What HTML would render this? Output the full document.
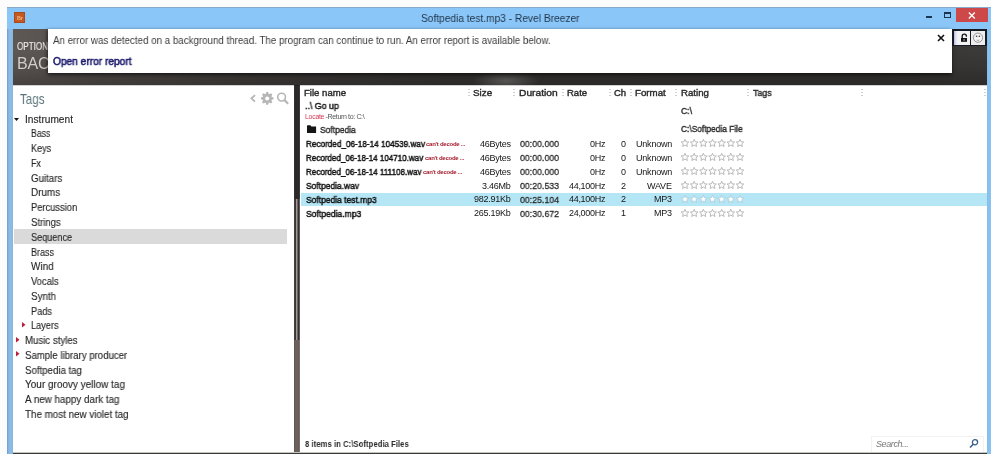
<!DOCTYPE html>
<html><head><meta charset="utf-8">
<style>
*{margin:0;padding:0;box-sizing:border-box}
html,body{width:991px;height:454px;overflow:hidden;background:#fcfcfc;font-family:"Liberation Sans",sans-serif;position:relative}
.a{position:absolute;white-space:pre;will-change:transform}
svg{position:absolute;overflow:visible}
</style></head><body>
<div class="a" style="left:7px;top:7px;width:984px;height:447px;background:#8bc6f8;"></div>
<div class="a" style="left:7px;top:7px;width:984px;height:1px;background:#88a9c9;"></div>
<div class="a" style="left:7px;top:29px;width:6px;height:425px;background:linear-gradient(90deg,#6f9ccc 0px,#7eaad8 1px,#8bbae6 2px,#8bbae6 5px,#8cb8d8 5px);"></div>
<div class="a" style="left:987px;top:29px;width:4px;height:425px;background:linear-gradient(90deg,#8ab8d8 0px,#88c2f0 1px);"></div>
<div class="a" style="left:14px;top:12px;width:11px;height:11px;background:#c4581f;border:1px solid #a84a1c;"></div>
<div class="a" style="left:17.20px;top:15.46px;font-size:5.5px;line-height:6.88px;font-weight:700;font-style:normal;color:#f0b88a;letter-spacing:-0.3px;">Br</div>
<div class="a" style="left:421.00px;top:12.21px;font-size:11px;line-height:13.75px;font-weight:400;font-style:normal;color:#1f3347;letter-spacing:0px;transform:scaleX(0.9258177570093459);transform-origin:0 50%;">Softpedia test.mp3 - Revel Breezer</div>
<div class="a" style="left:926px;top:16px;width:6px;height:2px;background:#1b3550;"></div>
<div class="a" style="left:944px;top:12px;width:7px;height:6px;border:1px solid #1b3550;border-top-width:2px;"></div>
<div class="a" style="left:956px;top:8px;width:32px;height:14px;background:#cd4848;"></div>
<svg style="left:968px;top:12px" width="8" height="7"><path d="M0.8 0.5 L6.8 6.5 M6.8 0.5 L0.8 6.5" stroke="#fff" stroke-width="1.3"/></svg>
<div class="a" style="left:13px;top:29px;width:974px;height:424px;background:#fff;"></div>
<div class="a" style="left:13px;top:29px;width:974px;height:56px;background:linear-gradient(180deg,rgba(0,0,0,0) 0px,rgba(0,0,0,0) 22px,rgba(0,0,0,.1) 40px,rgba(0,0,0,.25) 56px),linear-gradient(90deg,#5e5855 0%,#524d4a 10%,#433f3d 25%,#393736 45%,#383635 88%,#3a3837 95%,#3c3a39 100%);"></div>
<div class="a" style="left:440px;top:73px;width:140px;height:12px;background:radial-gradient(ellipse 34px 10px at 66px 8px,rgba(255,255,255,.2),rgba(255,255,255,0));"></div>
<div class="a" style="left:16.90px;top:39.80px;font-size:10.4px;line-height:13.00px;font-weight:400;font-style:normal;color:#ebe7e3;letter-spacing:0px;-webkit-text-stroke:0.15px #ebe7e3;transform:scaleX(0.78);transform-origin:0 50%;">OPTIONS</div>
<div class="a" style="left:16.80px;top:53.76px;font-size:16px;line-height:20.00px;font-weight:400;font-style:normal;color:#d2cdc9;letter-spacing:-0.2px;">BACK</div>
<div class="a" style="left:13px;top:85px;width:281px;height:368px;background:#fff;"></div>
<div class="a" style="left:20.10px;top:90.01px;font-size:14.5px;line-height:18.12px;font-weight:400;font-style:normal;color:#5b767b;letter-spacing:0px;transform:scaleX(0.8);transform-origin:0 50%;">Tags</div>
<div class="a" style="left:294px;top:85px;width:6px;height:114px;background:linear-gradient(90deg,#3a3838 0px,#2a2828 1px,#2a2828 5px,#3a3838 5px);"></div>
<div class="a" style="left:294px;top:199px;width:6px;height:141px;background:linear-gradient(90deg,#45403f 0px,#45403f 1px,#3b3635 1px,#3b3635 2px,#a29898 2px,#a29898 3px,#6d6565 3px,#6d6565 4px,#343030 4px,#343030 5px,#5e5a5a 5px);"></div>
<div class="a" style="left:294px;top:340px;width:6px;height:113px;background:linear-gradient(90deg,#5a504d 0px,#6b605c 1px,#6e6360 3px,#635955 5px,#7a706c 5px);"></div>
<div class="a" style="left:300px;top:85px;width:687px;height:368px;background:#fff;"></div>
<div class="a" style="left:13px;top:452px;width:974px;height:1px;background:#c4c4c0;"></div>
<div class="a" style="left:13px;top:453px;width:974px;height:1px;background:#3a3a36;"></div>
<div class="a" style="left:48px;top:29px;width:904px;height:44px;background:#fff;box-shadow:0 2px 4px rgba(0,0,0,.6),-2px 0 3px rgba(0,0,0,.2);"></div>
<div class="a" style="left:52.60px;top:33.70px;font-size:10.5px;line-height:13.12px;font-weight:400;font-style:normal;color:#3a3a3a;letter-spacing:0px;transform:scaleX(0.9290515309932785);transform-origin:0 50%;">An error was detected on a background thread. The program can continue to run. An error report is available below.</div>
<div class="a" style="left:52.60px;top:55.20px;font-size:10.5px;line-height:13.12px;font-weight:400;font-style:normal;color:#1c1a6c;letter-spacing:0px;-webkit-text-stroke:0.55px #1c1a6c;transform:scaleX(0.967940813810111);transform-origin:0 50%;">Open error report</div>
<svg style="left:937px;top:34px" width="8" height="8"><path d="M1 1 L7 7 M7 1 L1 7" stroke="#111" stroke-width="1.6"/></svg>
<div class="a" style="left:952px;top:29px;width:35px;height:17px;background:#161a24;"></div>
<div class="a" style="left:954px;top:31px;width:16px;height:14px;background:linear-gradient(90deg,#b4b6e6 0px,#e4e4f4 2px,#f2f2f2 4px);"></div>
<div class="a" style="left:971px;top:31px;width:14px;height:14px;background:#ededed;"></div>
<svg style="left:952px;top:29px" width="35" height="17"><path d="M10.2 9.2 V7.3 A2.1 2.1 0 0 1 14.4 7.3 V7.8" stroke="#111" stroke-width="1.3" fill="none"/><rect x="9" y="9" width="6" height="3.8" fill="#111"/><rect x="11.6" y="10.2" width="1" height="1.5" fill="#ddd"/><circle cx="26" cy="8.7" r="4.6" stroke="#8a8a8a" stroke-width="0.9" fill="#f4f4f4"/><circle cx="24.6" cy="7.3" r="0.8" fill="#333"/><circle cx="27.4" cy="7.3" r="0.8" fill="#333"/><path d="M24.6 11 Q26 12 27.4 11" stroke="#999" stroke-width="0.8" fill="none"/></svg>
<div class="a" style="left:14px;top:229px;width:273px;height:15px;background:#dadada;"></div>
<div class="a" style="left:24.60px;top:113.69px;font-size:10px;line-height:12.50px;font-weight:400;font-style:normal;color:#262626;letter-spacing:0px;-webkit-text-stroke:0.12px #262626;transform:scaleX(1.016);transform-origin:0 50%;">Instrument</div>
<svg style="left:14px;top:118.10px" width="5" height="3"><path d="M0 0 L5 0 L2.5 3 Z" fill="#111"/></svg>
<div class="a" style="left:30.60px;top:128.44px;font-size:10px;line-height:12.50px;font-weight:400;font-style:normal;color:#262626;letter-spacing:0px;-webkit-text-stroke:0.12px #262626;transform:scaleX(0.868);transform-origin:0 50%;">Bass</div>
<div class="a" style="left:30.60px;top:143.21px;font-size:10px;line-height:12.50px;font-weight:400;font-style:normal;color:#262626;letter-spacing:0px;-webkit-text-stroke:0.12px #262626;transform:scaleX(0.904);transform-origin:0 50%;">Keys</div>
<div class="a" style="left:30.60px;top:157.97px;font-size:10px;line-height:12.50px;font-weight:400;font-style:normal;color:#262626;letter-spacing:0px;-webkit-text-stroke:0.12px #262626;transform:scaleX(0.891);transform-origin:0 50%;">Fx</div>
<div class="a" style="left:30.60px;top:172.72px;font-size:10px;line-height:12.50px;font-weight:400;font-style:normal;color:#262626;letter-spacing:0px;-webkit-text-stroke:0.12px #262626;transform:scaleX(0.971);transform-origin:0 50%;">Guitars</div>
<div class="a" style="left:30.60px;top:187.48px;font-size:10px;line-height:12.50px;font-weight:400;font-style:normal;color:#262626;letter-spacing:0px;-webkit-text-stroke:0.12px #262626;transform:scaleX(0.988);transform-origin:0 50%;">Drums</div>
<div class="a" style="left:30.60px;top:202.25px;font-size:10px;line-height:12.50px;font-weight:400;font-style:normal;color:#262626;letter-spacing:0px;-webkit-text-stroke:0.12px #262626;transform:scaleX(0.934);transform-origin:0 50%;">Percussion</div>
<div class="a" style="left:30.60px;top:217.00px;font-size:10px;line-height:12.50px;font-weight:400;font-style:normal;color:#262626;letter-spacing:0px;-webkit-text-stroke:0.12px #262626;transform:scaleX(0.957);transform-origin:0 50%;">Strings</div>
<div class="a" style="left:30.60px;top:231.77px;font-size:10px;line-height:12.50px;font-weight:400;font-style:normal;color:#262626;letter-spacing:0px;-webkit-text-stroke:0.12px #262626;transform:scaleX(0.912);transform-origin:0 50%;">Sequence</div>
<div class="a" style="left:30.60px;top:246.53px;font-size:10px;line-height:12.50px;font-weight:400;font-style:normal;color:#262626;letter-spacing:0px;-webkit-text-stroke:0.12px #262626;transform:scaleX(0.9);transform-origin:0 50%;">Brass</div>
<div class="a" style="left:30.60px;top:261.29px;font-size:10px;line-height:12.50px;font-weight:400;font-style:normal;color:#262626;letter-spacing:0px;-webkit-text-stroke:0.12px #262626;transform:scaleX(0.991);transform-origin:0 50%;">Wind</div>
<div class="a" style="left:30.60px;top:276.05px;font-size:10px;line-height:12.50px;font-weight:400;font-style:normal;color:#262626;letter-spacing:0px;-webkit-text-stroke:0.12px #262626;transform:scaleX(0.937);transform-origin:0 50%;">Vocals</div>
<div class="a" style="left:30.60px;top:290.81px;font-size:10px;line-height:12.50px;font-weight:400;font-style:normal;color:#262626;letter-spacing:0px;-webkit-text-stroke:0.12px #262626;transform:scaleX(0.977);transform-origin:0 50%;">Synth</div>
<div class="a" style="left:30.60px;top:305.56px;font-size:10px;line-height:12.50px;font-weight:400;font-style:normal;color:#262626;letter-spacing:0px;-webkit-text-stroke:0.12px #262626;transform:scaleX(0.921);transform-origin:0 50%;">Pads</div>
<div class="a" style="left:30.60px;top:320.32px;font-size:10px;line-height:12.50px;font-weight:400;font-style:normal;color:#262626;letter-spacing:0px;-webkit-text-stroke:0.12px #262626;transform:scaleX(0.92);transform-origin:0 50%;">Layers</div>
<svg style="left:21.6px;top:321.84px" width="4" height="6"><path d="M0 0 L3.5 2.75 L0 5.5 Z" fill="#b8203a"/></svg>
<div class="a" style="left:24.60px;top:335.09px;font-size:10px;line-height:12.50px;font-weight:400;font-style:normal;color:#262626;letter-spacing:0px;-webkit-text-stroke:0.12px #262626;transform:scaleX(0.964);transform-origin:0 50%;">Music styles</div>
<svg style="left:15.8px;top:336.60px" width="4" height="6"><path d="M0 0 L3.5 2.75 L0 5.5 Z" fill="#b8203a"/></svg>
<div class="a" style="left:24.60px;top:349.85px;font-size:10px;line-height:12.50px;font-weight:400;font-style:normal;color:#262626;letter-spacing:0px;-webkit-text-stroke:0.12px #262626;transform:scaleX(0.963);transform-origin:0 50%;">Sample library producer</div>
<svg style="left:15.8px;top:351.36px" width="4" height="6"><path d="M0 0 L3.5 2.75 L0 5.5 Z" fill="#b8203a"/></svg>
<div class="a" style="left:24.60px;top:364.61px;font-size:10px;line-height:12.50px;font-weight:400;font-style:normal;color:#262626;letter-spacing:0px;-webkit-text-stroke:0.12px #262626;transform:scaleX(0.967);transform-origin:0 50%;">Softpedia tag</div>
<div class="a" style="left:24.60px;top:379.37px;font-size:10px;line-height:12.50px;font-weight:400;font-style:normal;color:#262626;letter-spacing:0px;-webkit-text-stroke:0.12px #262626;transform:scaleX(0.997);transform-origin:0 50%;">Your groovy yellow tag</div>
<div class="a" style="left:24.60px;top:394.13px;font-size:10px;line-height:12.50px;font-weight:400;font-style:normal;color:#262626;letter-spacing:0px;-webkit-text-stroke:0.12px #262626;transform:scaleX(0.983);transform-origin:0 50%;">A new happy dark tag</div>
<div class="a" style="left:24.60px;top:408.89px;font-size:10px;line-height:12.50px;font-weight:400;font-style:normal;color:#262626;letter-spacing:0px;-webkit-text-stroke:0.12px #262626;transform:scaleX(0.981);transform-origin:0 50%;">The most new violet tag</div>
<svg style="left:248px;top:90px" width="44" height="18"><path d="M7.1 5.1 L3.4 8.35 L7.0 11.6" stroke="#b6b6b6" stroke-width="1.8" fill="none"/><g transform="translate(19.2,8.4)" fill="#b6b6b6"><circle r="4.7"/><path d="M-1.6 -4 L-0.95 -6.3 L0.95 -6.3 L1.6 -4 Z" transform="rotate(0)"/><path d="M-1.6 -4 L-0.95 -6.3 L0.95 -6.3 L1.6 -4 Z" transform="rotate(45)"/><path d="M-1.6 -4 L-0.95 -6.3 L0.95 -6.3 L1.6 -4 Z" transform="rotate(90)"/><path d="M-1.6 -4 L-0.95 -6.3 L0.95 -6.3 L1.6 -4 Z" transform="rotate(135)"/><path d="M-1.6 -4 L-0.95 -6.3 L0.95 -6.3 L1.6 -4 Z" transform="rotate(180)"/><path d="M-1.6 -4 L-0.95 -6.3 L0.95 -6.3 L1.6 -4 Z" transform="rotate(225)"/><path d="M-1.6 -4 L-0.95 -6.3 L0.95 -6.3 L1.6 -4 Z" transform="rotate(270)"/><path d="M-1.6 -4 L-0.95 -6.3 L0.95 -6.3 L1.6 -4 Z" transform="rotate(315)"/><circle r="2" fill="#fff"/></g><circle cx="33.6" cy="7.1" r="3.9" stroke="#b6b6b6" stroke-width="1.6" fill="none"/><path d="M36.4 10.1 L40.2 13.7" stroke="#b6b6b6" stroke-width="2.2"/></svg>
<div class="a" style="left:304.40px;top:86.87px;font-size:9.5px;line-height:11.88px;font-weight:400;font-style:normal;color:#2a2a2a;letter-spacing:0px;-webkit-text-stroke:0.4px #2a2a2a;transform:scaleX(1.007);transform-origin:0 50%;">File name</div>
<div class="a" style="left:468px;top:89px;width:2px;height:1px;background:#cfcfcf;"></div>
<div class="a" style="left:468px;top:92px;width:2px;height:1px;background:#cfcfcf;"></div>
<div class="a" style="left:468px;top:95px;width:2px;height:1px;background:#cfcfcf;"></div>
<div class="a" style="left:473.00px;top:86.87px;font-size:9.5px;line-height:11.88px;font-weight:400;font-style:normal;color:#2a2a2a;letter-spacing:0px;-webkit-text-stroke:0.4px #2a2a2a;transform:scaleX(1.0335);transform-origin:0 50%;">Size</div>
<div class="a" style="left:513px;top:89px;width:2px;height:1px;background:#cfcfcf;"></div>
<div class="a" style="left:513px;top:92px;width:2px;height:1px;background:#cfcfcf;"></div>
<div class="a" style="left:513px;top:95px;width:2px;height:1px;background:#cfcfcf;"></div>
<div class="a" style="left:518.70px;top:86.87px;font-size:9.5px;line-height:11.88px;font-weight:400;font-style:normal;color:#2a2a2a;letter-spacing:0px;-webkit-text-stroke:0.4px #2a2a2a;transform:scaleX(1.075);transform-origin:0 50%;">Duration</div>
<div class="a" style="left:562px;top:89px;width:2px;height:1px;background:#cfcfcf;"></div>
<div class="a" style="left:562px;top:92px;width:2px;height:1px;background:#cfcfcf;"></div>
<div class="a" style="left:562px;top:95px;width:2px;height:1px;background:#cfcfcf;"></div>
<div class="a" style="left:567.00px;top:86.87px;font-size:9.5px;line-height:11.88px;font-weight:400;font-style:normal;color:#2a2a2a;letter-spacing:0px;-webkit-text-stroke:0.4px #2a2a2a;transform:scaleX(1.0017);transform-origin:0 50%;">Rate</div>
<div class="a" style="left:609px;top:89px;width:2px;height:1px;background:#cfcfcf;"></div>
<div class="a" style="left:609px;top:92px;width:2px;height:1px;background:#cfcfcf;"></div>
<div class="a" style="left:609px;top:95px;width:2px;height:1px;background:#cfcfcf;"></div>
<div class="a" style="left:613.90px;top:86.87px;font-size:9.5px;line-height:11.88px;font-weight:400;font-style:normal;color:#2a2a2a;letter-spacing:0px;-webkit-text-stroke:0.4px #2a2a2a;transform:scaleX(0.9964);transform-origin:0 50%;">Ch</div>
<div class="a" style="left:630px;top:89px;width:2px;height:1px;background:#cfcfcf;"></div>
<div class="a" style="left:630px;top:92px;width:2px;height:1px;background:#cfcfcf;"></div>
<div class="a" style="left:630px;top:95px;width:2px;height:1px;background:#cfcfcf;"></div>
<div class="a" style="left:635.00px;top:86.87px;font-size:9.5px;line-height:11.88px;font-weight:400;font-style:normal;color:#2a2a2a;letter-spacing:0px;-webkit-text-stroke:0.4px #2a2a2a;transform:scaleX(1.0238);transform-origin:0 50%;">Format</div>
<div class="a" style="left:675px;top:89px;width:2px;height:1px;background:#cfcfcf;"></div>
<div class="a" style="left:675px;top:92px;width:2px;height:1px;background:#cfcfcf;"></div>
<div class="a" style="left:675px;top:95px;width:2px;height:1px;background:#cfcfcf;"></div>
<div class="a" style="left:680.70px;top:86.87px;font-size:9.5px;line-height:11.88px;font-weight:400;font-style:normal;color:#2a2a2a;letter-spacing:0px;-webkit-text-stroke:0.4px #2a2a2a;transform:scaleX(1.016);transform-origin:0 50%;">Rating</div>
<div class="a" style="left:747px;top:89px;width:2px;height:1px;background:#cfcfcf;"></div>
<div class="a" style="left:747px;top:92px;width:2px;height:1px;background:#cfcfcf;"></div>
<div class="a" style="left:747px;top:95px;width:2px;height:1px;background:#cfcfcf;"></div>
<div class="a" style="left:752.80px;top:86.87px;font-size:9.5px;line-height:11.88px;font-weight:400;font-style:normal;color:#2a2a2a;letter-spacing:0px;-webkit-text-stroke:0.4px #2a2a2a;transform:scaleX(0.9319);transform-origin:0 50%;">Tags</div>
<div class="a" style="left:861px;top:89px;width:2px;height:1px;background:#cfcfcf;"></div>
<div class="a" style="left:861px;top:92px;width:2px;height:1px;background:#cfcfcf;"></div>
<div class="a" style="left:861px;top:95px;width:2px;height:1px;background:#cfcfcf;"></div>
<div class="a" style="left:984px;top:89px;width:2px;height:1px;background:#cfcfcf;"></div>
<div class="a" style="left:984px;top:92px;width:2px;height:1px;background:#cfcfcf;"></div>
<div class="a" style="left:984px;top:95px;width:2px;height:1px;background:#cfcfcf;"></div>
<div class="a" style="left:13px;top:85px;width:974px;height:1px;background:rgba(0,0,0,.18);"></div>
<div class="a" style="left:305.20px;top:100.37px;font-size:9.5px;line-height:11.88px;font-weight:400;font-style:normal;color:#1a1a1a;letter-spacing:0px;-webkit-text-stroke:0.5px #1a1a1a;transform:scaleX(0.9277);transform-origin:0 50%;">..\ Go up</div>
<div class="a" style="left:305.00px;top:113.20px;font-size:7px;line-height:8.75px;font-weight:400;font-style:normal;color:#d83a58;letter-spacing:-0.3px;">Locate</div>
<div class="a" style="left:323.50px;top:113.20px;font-size:7px;line-height:8.75px;font-weight:400;font-style:normal;color:#555;letter-spacing:-0.35px;"> -Return to: C:\</div>
<div class="a" style="left:681.20px;top:104.97px;font-size:9.5px;line-height:11.88px;font-weight:400;font-style:normal;color:#2a2a2a;letter-spacing:0px;-webkit-text-stroke:0.4px #2a2a2a;transform:scaleX(0.9144);transform-origin:0 50%;">C:\</div>
<svg style="left:307px;top:125px" width="10" height="8"><path d="M0.5 0.2 H3.4 L4.4 1.4 H9.1 V7.9 H0 V0.7 Z" fill="#151515"/></svg>
<div class="a" style="left:319.70px;top:123.87px;font-size:9.5px;line-height:11.88px;font-weight:400;font-style:normal;color:#2a2a2a;letter-spacing:0px;-webkit-text-stroke:0.4px #2a2a2a;transform:scaleX(0.8894);transform-origin:0 50%;">Softpedia</div>
<div class="a" style="left:681.20px;top:123.37px;font-size:9.5px;line-height:11.88px;font-weight:400;font-style:normal;color:#2a2a2a;letter-spacing:0px;-webkit-text-stroke:0.4px #2a2a2a;transform:scaleX(0.8772);transform-origin:0 50%;">C:\Softpedia File</div>
<div class="a" style="left:301px;top:193px;width:686px;height:13px;background:#b5e6f6;"></div>
<div class="a" style="left:305.80px;top:138.37px;font-size:9.5px;line-height:11.88px;font-weight:400;font-style:normal;color:#141414;letter-spacing:0px;-webkit-text-stroke:0.5px #141414;transform:scaleX(0.86);transform-origin:0 50%;">Recorded_06-18-14 104539.wav</div>
<div class="a" style="left:426.00px;top:141.47px;font-size:6px;line-height:7.50px;font-weight:700;font-style:normal;color:#a41a2a;letter-spacing:-0.25px;">can't decode ...</div>
<div class="a" style="right:480.50px;text-align:right;top:138.86px;font-size:9px;line-height:11.25px;font-weight:400;font-style:normal;color:#151515;letter-spacing:-0.25px;">46Bytes</div>
<div class="a" style="left:519.60px;top:138.37px;font-size:9.5px;line-height:11.88px;font-weight:400;font-style:normal;color:#2a2a2a;letter-spacing:0px;-webkit-text-stroke:0.3px #2a2a2a;transform:scaleX(0.9229);transform-origin:0 50%;">00:00.000</div>
<div class="a" style="right:385.50px;text-align:right;top:138.86px;font-size:9px;line-height:11.25px;font-weight:400;font-style:normal;color:#151515;letter-spacing:-0.3px;">0Hz</div>
<div class="a" style="right:365.00px;text-align:right;top:138.86px;font-size:9px;line-height:11.25px;font-weight:400;font-style:normal;color:#151515;letter-spacing:0px;">0</div>
<div class="a" style="right:319.20px;text-align:right;top:138.86px;font-size:9px;line-height:11.25px;font-weight:400;font-style:normal;color:#151515;letter-spacing:-0.2px;">Unknown</div>
<svg style="left:680.5px;top:139.20px" width="70" height="9"><g transform="translate(0.00,0)"><path d="M4 0.3 L5.1 2.8 L7.8 3 L5.8 4.8 L6.4 7.5 L4 6.1 L1.6 7.5 L2.2 4.8 L0.2 3 L2.9 2.8 Z" fill="none" stroke="#b2b2b2" stroke-width="0.9"/></g><g transform="translate(9.17,0)"><path d="M4 0.3 L5.1 2.8 L7.8 3 L5.8 4.8 L6.4 7.5 L4 6.1 L1.6 7.5 L2.2 4.8 L0.2 3 L2.9 2.8 Z" fill="none" stroke="#b2b2b2" stroke-width="0.9"/></g><g transform="translate(18.34,0)"><path d="M4 0.3 L5.1 2.8 L7.8 3 L5.8 4.8 L6.4 7.5 L4 6.1 L1.6 7.5 L2.2 4.8 L0.2 3 L2.9 2.8 Z" fill="none" stroke="#b2b2b2" stroke-width="0.9"/></g><g transform="translate(27.51,0)"><path d="M4 0.3 L5.1 2.8 L7.8 3 L5.8 4.8 L6.4 7.5 L4 6.1 L1.6 7.5 L2.2 4.8 L0.2 3 L2.9 2.8 Z" fill="none" stroke="#b2b2b2" stroke-width="0.9"/></g><g transform="translate(36.68,0)"><path d="M4 0.3 L5.1 2.8 L7.8 3 L5.8 4.8 L6.4 7.5 L4 6.1 L1.6 7.5 L2.2 4.8 L0.2 3 L2.9 2.8 Z" fill="none" stroke="#b2b2b2" stroke-width="0.9"/></g><g transform="translate(45.85,0)"><path d="M4 0.3 L5.1 2.8 L7.8 3 L5.8 4.8 L6.4 7.5 L4 6.1 L1.6 7.5 L2.2 4.8 L0.2 3 L2.9 2.8 Z" fill="none" stroke="#b2b2b2" stroke-width="0.9"/></g><g transform="translate(55.02,0)"><path d="M4 0.3 L5.1 2.8 L7.8 3 L5.8 4.8 L6.4 7.5 L4 6.1 L1.6 7.5 L2.2 4.8 L0.2 3 L2.9 2.8 Z" fill="none" stroke="#b2b2b2" stroke-width="0.9"/></g></svg>
<div class="a" style="left:305.80px;top:152.25px;font-size:9.5px;line-height:11.88px;font-weight:400;font-style:normal;color:#141414;letter-spacing:0px;-webkit-text-stroke:0.5px #141414;transform:scaleX(0.847);transform-origin:0 50%;">Recorded_06-18-14 104710.wav</div>
<div class="a" style="left:424.60px;top:155.35px;font-size:6px;line-height:7.50px;font-weight:700;font-style:normal;color:#a41a2a;letter-spacing:-0.25px;">can't decode ...</div>
<div class="a" style="right:480.50px;text-align:right;top:152.74px;font-size:9px;line-height:11.25px;font-weight:400;font-style:normal;color:#151515;letter-spacing:-0.25px;">46Bytes</div>
<div class="a" style="left:519.60px;top:152.25px;font-size:9.5px;line-height:11.88px;font-weight:400;font-style:normal;color:#2a2a2a;letter-spacing:0px;-webkit-text-stroke:0.3px #2a2a2a;transform:scaleX(0.9229);transform-origin:0 50%;">00:00.000</div>
<div class="a" style="right:385.50px;text-align:right;top:152.74px;font-size:9px;line-height:11.25px;font-weight:400;font-style:normal;color:#151515;letter-spacing:-0.3px;">0Hz</div>
<div class="a" style="right:365.00px;text-align:right;top:152.74px;font-size:9px;line-height:11.25px;font-weight:400;font-style:normal;color:#151515;letter-spacing:0px;">0</div>
<div class="a" style="right:319.20px;text-align:right;top:152.74px;font-size:9px;line-height:11.25px;font-weight:400;font-style:normal;color:#151515;letter-spacing:-0.2px;">Unknown</div>
<svg style="left:680.5px;top:153.08px" width="70" height="9"><g transform="translate(0.00,0)"><path d="M4 0.3 L5.1 2.8 L7.8 3 L5.8 4.8 L6.4 7.5 L4 6.1 L1.6 7.5 L2.2 4.8 L0.2 3 L2.9 2.8 Z" fill="none" stroke="#b2b2b2" stroke-width="0.9"/></g><g transform="translate(9.17,0)"><path d="M4 0.3 L5.1 2.8 L7.8 3 L5.8 4.8 L6.4 7.5 L4 6.1 L1.6 7.5 L2.2 4.8 L0.2 3 L2.9 2.8 Z" fill="none" stroke="#b2b2b2" stroke-width="0.9"/></g><g transform="translate(18.34,0)"><path d="M4 0.3 L5.1 2.8 L7.8 3 L5.8 4.8 L6.4 7.5 L4 6.1 L1.6 7.5 L2.2 4.8 L0.2 3 L2.9 2.8 Z" fill="none" stroke="#b2b2b2" stroke-width="0.9"/></g><g transform="translate(27.51,0)"><path d="M4 0.3 L5.1 2.8 L7.8 3 L5.8 4.8 L6.4 7.5 L4 6.1 L1.6 7.5 L2.2 4.8 L0.2 3 L2.9 2.8 Z" fill="none" stroke="#b2b2b2" stroke-width="0.9"/></g><g transform="translate(36.68,0)"><path d="M4 0.3 L5.1 2.8 L7.8 3 L5.8 4.8 L6.4 7.5 L4 6.1 L1.6 7.5 L2.2 4.8 L0.2 3 L2.9 2.8 Z" fill="none" stroke="#b2b2b2" stroke-width="0.9"/></g><g transform="translate(45.85,0)"><path d="M4 0.3 L5.1 2.8 L7.8 3 L5.8 4.8 L6.4 7.5 L4 6.1 L1.6 7.5 L2.2 4.8 L0.2 3 L2.9 2.8 Z" fill="none" stroke="#b2b2b2" stroke-width="0.9"/></g><g transform="translate(55.02,0)"><path d="M4 0.3 L5.1 2.8 L7.8 3 L5.8 4.8 L6.4 7.5 L4 6.1 L1.6 7.5 L2.2 4.8 L0.2 3 L2.9 2.8 Z" fill="none" stroke="#b2b2b2" stroke-width="0.9"/></g></svg>
<div class="a" style="left:305.80px;top:166.13px;font-size:9.5px;line-height:11.88px;font-weight:400;font-style:normal;color:#141414;letter-spacing:0px;-webkit-text-stroke:0.5px #141414;transform:scaleX(0.8477);transform-origin:0 50%;">Recorded_06-18-14 111108.wav</div>
<div class="a" style="left:423.10px;top:169.23px;font-size:6px;line-height:7.50px;font-weight:700;font-style:normal;color:#a41a2a;letter-spacing:-0.25px;">can't decode ...</div>
<div class="a" style="right:480.50px;text-align:right;top:166.62px;font-size:9px;line-height:11.25px;font-weight:400;font-style:normal;color:#151515;letter-spacing:-0.25px;">46Bytes</div>
<div class="a" style="left:519.60px;top:166.13px;font-size:9.5px;line-height:11.88px;font-weight:400;font-style:normal;color:#2a2a2a;letter-spacing:0px;-webkit-text-stroke:0.3px #2a2a2a;transform:scaleX(0.9229);transform-origin:0 50%;">00:00.000</div>
<div class="a" style="right:385.50px;text-align:right;top:166.62px;font-size:9px;line-height:11.25px;font-weight:400;font-style:normal;color:#151515;letter-spacing:-0.3px;">0Hz</div>
<div class="a" style="right:365.00px;text-align:right;top:166.62px;font-size:9px;line-height:11.25px;font-weight:400;font-style:normal;color:#151515;letter-spacing:0px;">0</div>
<div class="a" style="right:319.20px;text-align:right;top:166.62px;font-size:9px;line-height:11.25px;font-weight:400;font-style:normal;color:#151515;letter-spacing:-0.2px;">Unknown</div>
<svg style="left:680.5px;top:166.96px" width="70" height="9"><g transform="translate(0.00,0)"><path d="M4 0.3 L5.1 2.8 L7.8 3 L5.8 4.8 L6.4 7.5 L4 6.1 L1.6 7.5 L2.2 4.8 L0.2 3 L2.9 2.8 Z" fill="none" stroke="#b2b2b2" stroke-width="0.9"/></g><g transform="translate(9.17,0)"><path d="M4 0.3 L5.1 2.8 L7.8 3 L5.8 4.8 L6.4 7.5 L4 6.1 L1.6 7.5 L2.2 4.8 L0.2 3 L2.9 2.8 Z" fill="none" stroke="#b2b2b2" stroke-width="0.9"/></g><g transform="translate(18.34,0)"><path d="M4 0.3 L5.1 2.8 L7.8 3 L5.8 4.8 L6.4 7.5 L4 6.1 L1.6 7.5 L2.2 4.8 L0.2 3 L2.9 2.8 Z" fill="none" stroke="#b2b2b2" stroke-width="0.9"/></g><g transform="translate(27.51,0)"><path d="M4 0.3 L5.1 2.8 L7.8 3 L5.8 4.8 L6.4 7.5 L4 6.1 L1.6 7.5 L2.2 4.8 L0.2 3 L2.9 2.8 Z" fill="none" stroke="#b2b2b2" stroke-width="0.9"/></g><g transform="translate(36.68,0)"><path d="M4 0.3 L5.1 2.8 L7.8 3 L5.8 4.8 L6.4 7.5 L4 6.1 L1.6 7.5 L2.2 4.8 L0.2 3 L2.9 2.8 Z" fill="none" stroke="#b2b2b2" stroke-width="0.9"/></g><g transform="translate(45.85,0)"><path d="M4 0.3 L5.1 2.8 L7.8 3 L5.8 4.8 L6.4 7.5 L4 6.1 L1.6 7.5 L2.2 4.8 L0.2 3 L2.9 2.8 Z" fill="none" stroke="#b2b2b2" stroke-width="0.9"/></g><g transform="translate(55.02,0)"><path d="M4 0.3 L5.1 2.8 L7.8 3 L5.8 4.8 L6.4 7.5 L4 6.1 L1.6 7.5 L2.2 4.8 L0.2 3 L2.9 2.8 Z" fill="none" stroke="#b2b2b2" stroke-width="0.9"/></g></svg>
<div class="a" style="left:305.80px;top:180.01px;font-size:9.5px;line-height:11.88px;font-weight:400;font-style:normal;color:#141414;letter-spacing:0px;-webkit-text-stroke:0.5px #141414;transform:scaleX(0.8882);transform-origin:0 50%;">Softpedia.wav</div>
<div class="a" style="right:480.50px;text-align:right;top:180.50px;font-size:9px;line-height:11.25px;font-weight:400;font-style:normal;color:#151515;letter-spacing:-0.25px;">3.46Mb</div>
<div class="a" style="left:519.60px;top:180.01px;font-size:9.5px;line-height:11.88px;font-weight:400;font-style:normal;color:#2a2a2a;letter-spacing:0px;-webkit-text-stroke:0.3px #2a2a2a;transform:scaleX(0.9229);transform-origin:0 50%;">00:20.533</div>
<div class="a" style="right:385.50px;text-align:right;top:180.50px;font-size:9px;line-height:11.25px;font-weight:400;font-style:normal;color:#151515;letter-spacing:-0.3px;">44,100Hz</div>
<div class="a" style="right:365.00px;text-align:right;top:180.50px;font-size:9px;line-height:11.25px;font-weight:400;font-style:normal;color:#151515;letter-spacing:0px;">2</div>
<div class="a" style="right:319.20px;text-align:right;top:180.50px;font-size:9px;line-height:11.25px;font-weight:400;font-style:normal;color:#151515;letter-spacing:-0.2px;">WAVE</div>
<svg style="left:680.5px;top:180.84px" width="70" height="9"><g transform="translate(0.00,0)"><path d="M4 0.3 L5.1 2.8 L7.8 3 L5.8 4.8 L6.4 7.5 L4 6.1 L1.6 7.5 L2.2 4.8 L0.2 3 L2.9 2.8 Z" fill="none" stroke="#b2b2b2" stroke-width="0.9"/></g><g transform="translate(9.17,0)"><path d="M4 0.3 L5.1 2.8 L7.8 3 L5.8 4.8 L6.4 7.5 L4 6.1 L1.6 7.5 L2.2 4.8 L0.2 3 L2.9 2.8 Z" fill="none" stroke="#b2b2b2" stroke-width="0.9"/></g><g transform="translate(18.34,0)"><path d="M4 0.3 L5.1 2.8 L7.8 3 L5.8 4.8 L6.4 7.5 L4 6.1 L1.6 7.5 L2.2 4.8 L0.2 3 L2.9 2.8 Z" fill="none" stroke="#b2b2b2" stroke-width="0.9"/></g><g transform="translate(27.51,0)"><path d="M4 0.3 L5.1 2.8 L7.8 3 L5.8 4.8 L6.4 7.5 L4 6.1 L1.6 7.5 L2.2 4.8 L0.2 3 L2.9 2.8 Z" fill="none" stroke="#b2b2b2" stroke-width="0.9"/></g><g transform="translate(36.68,0)"><path d="M4 0.3 L5.1 2.8 L7.8 3 L5.8 4.8 L6.4 7.5 L4 6.1 L1.6 7.5 L2.2 4.8 L0.2 3 L2.9 2.8 Z" fill="none" stroke="#b2b2b2" stroke-width="0.9"/></g><g transform="translate(45.85,0)"><path d="M4 0.3 L5.1 2.8 L7.8 3 L5.8 4.8 L6.4 7.5 L4 6.1 L1.6 7.5 L2.2 4.8 L0.2 3 L2.9 2.8 Z" fill="none" stroke="#b2b2b2" stroke-width="0.9"/></g><g transform="translate(55.02,0)"><path d="M4 0.3 L5.1 2.8 L7.8 3 L5.8 4.8 L6.4 7.5 L4 6.1 L1.6 7.5 L2.2 4.8 L0.2 3 L2.9 2.8 Z" fill="none" stroke="#b2b2b2" stroke-width="0.9"/></g></svg>
<div class="a" style="left:305.80px;top:193.89px;font-size:9.5px;line-height:11.88px;font-weight:400;font-style:normal;color:#141414;letter-spacing:0px;-webkit-text-stroke:0.5px #141414;transform:scaleX(0.8913);transform-origin:0 50%;">Softpedia test.mp3</div>
<div class="a" style="right:480.50px;text-align:right;top:194.38px;font-size:9px;line-height:11.25px;font-weight:400;font-style:normal;color:#151515;letter-spacing:-0.25px;">982.91Kb</div>
<div class="a" style="left:519.60px;top:193.89px;font-size:9.5px;line-height:11.88px;font-weight:400;font-style:normal;color:#2a2a2a;letter-spacing:0px;-webkit-text-stroke:0.3px #2a2a2a;transform:scaleX(0.9229);transform-origin:0 50%;">00:25.104</div>
<div class="a" style="right:385.50px;text-align:right;top:194.38px;font-size:9px;line-height:11.25px;font-weight:400;font-style:normal;color:#151515;letter-spacing:-0.3px;">44,100Hz</div>
<div class="a" style="right:365.00px;text-align:right;top:194.38px;font-size:9px;line-height:11.25px;font-weight:400;font-style:normal;color:#151515;letter-spacing:0px;">2</div>
<div class="a" style="right:319.20px;text-align:right;top:194.38px;font-size:9px;line-height:11.25px;font-weight:400;font-style:normal;color:#151515;letter-spacing:-0.2px;">MP3</div>
<svg style="left:680.5px;top:194.72px" width="70" height="9"><g transform="translate(0.00,0)"><path d="M4 0.3 L5.1 2.8 L7.8 3 L5.8 4.8 L6.4 7.5 L4 6.1 L1.6 7.5 L2.2 4.8 L0.2 3 L2.9 2.8 Z" fill="#fff" stroke="#a9cad6" stroke-width="0.8"/></g><g transform="translate(9.17,0)"><path d="M4 0.3 L5.1 2.8 L7.8 3 L5.8 4.8 L6.4 7.5 L4 6.1 L1.6 7.5 L2.2 4.8 L0.2 3 L2.9 2.8 Z" fill="#fff" stroke="#a9cad6" stroke-width="0.8"/></g><g transform="translate(18.34,0)"><path d="M4 0.3 L5.1 2.8 L7.8 3 L5.8 4.8 L6.4 7.5 L4 6.1 L1.6 7.5 L2.2 4.8 L0.2 3 L2.9 2.8 Z" fill="#fff" stroke="#a9cad6" stroke-width="0.8"/></g><g transform="translate(27.51,0)"><path d="M4 0.3 L5.1 2.8 L7.8 3 L5.8 4.8 L6.4 7.5 L4 6.1 L1.6 7.5 L2.2 4.8 L0.2 3 L2.9 2.8 Z" fill="#fff" stroke="#a9cad6" stroke-width="0.8"/></g><g transform="translate(36.68,0)"><path d="M4 0.3 L5.1 2.8 L7.8 3 L5.8 4.8 L6.4 7.5 L4 6.1 L1.6 7.5 L2.2 4.8 L0.2 3 L2.9 2.8 Z" fill="#fff" stroke="#a9cad6" stroke-width="0.8"/></g><g transform="translate(45.85,0)"><path d="M4 0.3 L5.1 2.8 L7.8 3 L5.8 4.8 L6.4 7.5 L4 6.1 L1.6 7.5 L2.2 4.8 L0.2 3 L2.9 2.8 Z" fill="#fff" stroke="#a9cad6" stroke-width="0.8"/></g><g transform="translate(55.02,0)"><path d="M4 0.3 L5.1 2.8 L7.8 3 L5.8 4.8 L6.4 7.5 L4 6.1 L1.6 7.5 L2.2 4.8 L0.2 3 L2.9 2.8 Z" fill="#fff" stroke="#a9cad6" stroke-width="0.8"/></g></svg>
<div class="a" style="left:305.80px;top:207.77px;font-size:9.5px;line-height:11.88px;font-weight:400;font-style:normal;color:#141414;letter-spacing:0px;-webkit-text-stroke:0.5px #141414;transform:scaleX(0.9027);transform-origin:0 50%;">Softpedia.mp3</div>
<div class="a" style="right:480.50px;text-align:right;top:208.26px;font-size:9px;line-height:11.25px;font-weight:400;font-style:normal;color:#151515;letter-spacing:-0.25px;">265.19Kb</div>
<div class="a" style="left:519.60px;top:207.77px;font-size:9.5px;line-height:11.88px;font-weight:400;font-style:normal;color:#2a2a2a;letter-spacing:0px;-webkit-text-stroke:0.3px #2a2a2a;transform:scaleX(0.9229);transform-origin:0 50%;">00:30.672</div>
<div class="a" style="right:385.50px;text-align:right;top:208.26px;font-size:9px;line-height:11.25px;font-weight:400;font-style:normal;color:#151515;letter-spacing:-0.3px;">24,000Hz</div>
<div class="a" style="right:365.00px;text-align:right;top:208.26px;font-size:9px;line-height:11.25px;font-weight:400;font-style:normal;color:#151515;letter-spacing:0px;">1</div>
<div class="a" style="right:319.20px;text-align:right;top:208.26px;font-size:9px;line-height:11.25px;font-weight:400;font-style:normal;color:#151515;letter-spacing:-0.2px;">MP3</div>
<svg style="left:680.5px;top:208.60px" width="70" height="9"><g transform="translate(0.00,0)"><path d="M4 0.3 L5.1 2.8 L7.8 3 L5.8 4.8 L6.4 7.5 L4 6.1 L1.6 7.5 L2.2 4.8 L0.2 3 L2.9 2.8 Z" fill="none" stroke="#b2b2b2" stroke-width="0.9"/></g><g transform="translate(9.17,0)"><path d="M4 0.3 L5.1 2.8 L7.8 3 L5.8 4.8 L6.4 7.5 L4 6.1 L1.6 7.5 L2.2 4.8 L0.2 3 L2.9 2.8 Z" fill="none" stroke="#b2b2b2" stroke-width="0.9"/></g><g transform="translate(18.34,0)"><path d="M4 0.3 L5.1 2.8 L7.8 3 L5.8 4.8 L6.4 7.5 L4 6.1 L1.6 7.5 L2.2 4.8 L0.2 3 L2.9 2.8 Z" fill="none" stroke="#b2b2b2" stroke-width="0.9"/></g><g transform="translate(27.51,0)"><path d="M4 0.3 L5.1 2.8 L7.8 3 L5.8 4.8 L6.4 7.5 L4 6.1 L1.6 7.5 L2.2 4.8 L0.2 3 L2.9 2.8 Z" fill="none" stroke="#b2b2b2" stroke-width="0.9"/></g><g transform="translate(36.68,0)"><path d="M4 0.3 L5.1 2.8 L7.8 3 L5.8 4.8 L6.4 7.5 L4 6.1 L1.6 7.5 L2.2 4.8 L0.2 3 L2.9 2.8 Z" fill="none" stroke="#b2b2b2" stroke-width="0.9"/></g><g transform="translate(45.85,0)"><path d="M4 0.3 L5.1 2.8 L7.8 3 L5.8 4.8 L6.4 7.5 L4 6.1 L1.6 7.5 L2.2 4.8 L0.2 3 L2.9 2.8 Z" fill="none" stroke="#b2b2b2" stroke-width="0.9"/></g><g transform="translate(55.02,0)"><path d="M4 0.3 L5.1 2.8 L7.8 3 L5.8 4.8 L6.4 7.5 L4 6.1 L1.6 7.5 L2.2 4.8 L0.2 3 L2.9 2.8 Z" fill="none" stroke="#b2b2b2" stroke-width="0.9"/></g></svg>
<div class="a" style="left:304.60px;top:438.37px;font-size:9.5px;line-height:11.88px;font-weight:700;font-style:normal;color:#2a2a2a;letter-spacing:0px;transform:scaleX(0.819258089976322);transform-origin:0 50%;">8 items in C:\Softpedia Files</div>
<div class="a" style="left:871px;top:436px;width:113px;height:16px;border:1px solid #f2f2f0;border-bottom:none;background:#fff;"></div>
<div class="a" style="left:876.00px;top:438.76px;font-size:9px;line-height:11.25px;font-weight:400;font-style:italic;color:#777;letter-spacing:-0.4px;">Search...</div>
<svg style="left:969px;top:439px" width="10" height="9"><circle cx="6" cy="3.3" r="2.6" stroke="#3a5f88" stroke-width="1.3" fill="none"/><path d="M4.2 5.3 L1 8.5" stroke="#3a5f88" stroke-width="1.6"/></svg>
</body></html>
